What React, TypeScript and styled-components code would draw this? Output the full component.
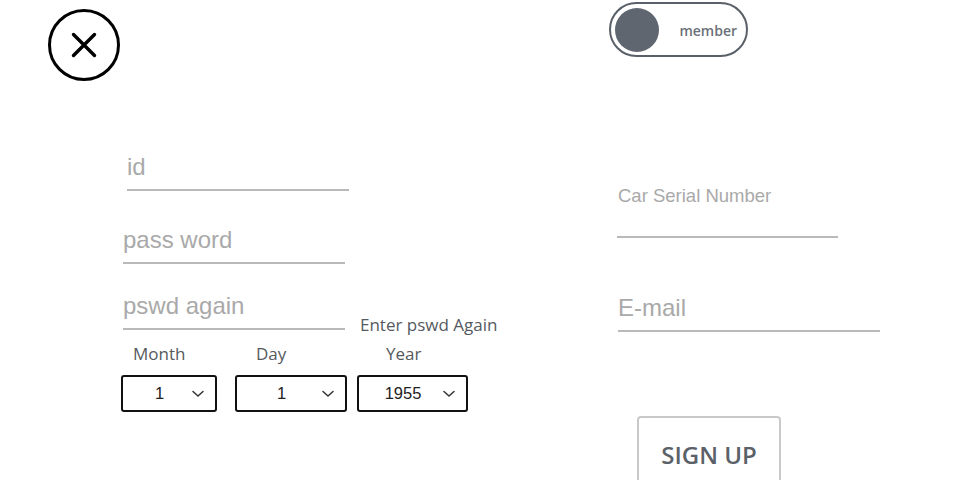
import React from "react";
import styled, { createGlobalStyle } from "styled-components";

const GlobalStyle = createGlobalStyle`
  html, body {
    margin: 0;
    padding: 0;
    background: #ffffff;
    overflow: hidden;
    width: 960px;
    height: 480px;
  }
  * { box-sizing: border-box; }
`;

const Page = styled.div`
  width: 960px;
  height: 480px;
  overflow: hidden;
  font-family: "Open Sans", "Noto Sans", sans-serif;
`;

const Header = styled.header`
  display: flex;
  align-items: flex-start;
  padding: 2px 0 0 48px;
`;

const CloseButton = styled.button`
  width: 72px;
  height: 72px;
  margin-top: 7px;
  padding: 0;
  border: none;
  background: transparent;
  display: block;
  cursor: pointer;
  svg { display: block; }
`;

const Toggle = styled.div`
  margin-left: 489px;
  width: 139px;
  height: 55px;
  border: 2px solid #5a6068;
  border-radius: 28px;
  display: flex;
  align-items: center;
  padding-left: 4px;
`;

const Knob = styled.div`
  width: 44px;
  height: 44px;
  border-radius: 50%;
  background: #5f6670;
`;

const ToggleLabel = styled.span`
  margin-left: auto;
  margin-right: 9px;
  margin-top: 2px;
  font-size: 14px;
  font-weight: 600;
  color: #6b7178;
`;

const Body = styled.main`
  display: grid;
  grid-template-columns: 496px 1fr;
  padding-left: 121px;
`;

const Column = styled.div`
  display: flex;
  flex-direction: column;
  align-items: flex-start;
`;

const Field = styled.input<{ $w: number; $top: number; $left: number }>`
  width: ${(p) => p.$w}px;
  margin-top: ${(p) => p.$top}px;
  margin-left: ${(p) => p.$left}px;
  height: 38px;
  padding: 0 0 8px 0;
  border: none;
  border-bottom: 2px solid #b9b9b9;
  outline: none;
  background: transparent;
  font-family: "Liberation Sans", Arial, sans-serif;
  font-size: 24px;
  line-height: 28px;
  color: #333;
  &::placeholder { color: #a9a9a9; }
`;

const PswdRow = styled.div`
  display: flex;
  align-items: flex-start;
  margin-top: 28px;
  margin-left: 2px;
`;

const Hint = styled.span`
  margin-top: 22px;
  margin-left: 15px;
  font-size: 17px;
  line-height: 22px;
  color: #555a60;
  white-space: nowrap;
`;

const DateRow = styled.div`
  display: flex;
  margin-top: 7px;
`;

const DateCol = styled.div<{ $gap: number }>`
  display: flex;
  flex-direction: column;
  margin-left: ${(p) => p.$gap}px;
`;

const DateLabel = styled.span<{ $indent: number }>`
  margin-left: ${(p) => p.$indent}px;
  font-size: 17px;
  line-height: 22px;
  color: #555a60;
`;

const Select = styled.div<{ $w: number }>`
  margin-top: 10px;
  width: ${(p) => p.$w}px;
  height: 37px;
  border: 2px solid #111;
  border-radius: 3px;
  display: flex;
  align-items: center;
  padding-left: 4px;
  padding-right: 11px;
  font-family: "Liberation Sans", Arial, sans-serif;
  font-size: 16.5px;
  color: #222;
`;

const SelectValue = styled.span`
  flex: 1;
  text-align: center;
`;

const CarLabel = styled.label`
  margin-top: 104px;
  margin-left: 1px;
  font-family: "Liberation Sans", Arial, sans-serif;
  font-size: 18.5px;
  line-height: 22px;
  color: #a9a9a9;
`;

const CarInput = styled.input`
  width: 221px;
  height: 31px;
  border: none;
  border-bottom: 2px solid #b9b9b9;
  outline: none;
  background: transparent;
  padding: 0;
`;

const SignUp = styled.button`
  margin-top: 84px;
  margin-left: 20px;
  width: 144px;
  height: 90px;
  border: 2px solid #c9c9c9;
  border-radius: 4px;
  background: #fff;
  padding: 20px 0 0 0;
  display: flex;
  justify-content: center;
  align-items: flex-start;
  font-family: "Open Sans", "Noto Sans", sans-serif;
  font-size: 24px;
  line-height: 33px;
  font-weight: 600;
  color: #5b6169;
`;

const Chevron = () => (
  <svg width="12" height="8" viewBox="0 0 12 8" fill="none">
    <path d="M1 1.5 L6 6 L11 1.5" stroke="#333" strokeWidth="1.5" strokeLinecap="round" strokeLinejoin="round" />
  </svg>
);

const CloseIcon = () => (
  <svg width="72" height="72" viewBox="0 0 72 72" fill="none">
    <circle cx="36" cy="36" r="34.5" stroke="#000" strokeWidth="3" />
    <path d="M25.5 25.5 L46.5 46.5 M46.5 25.5 L25.5 46.5" stroke="#000" strokeWidth="3.4" strokeLinecap="round" />
  </svg>
);

const dates = [
  { label: "Month", value: "1", w: 96, gap: 0, indent: 12 },
  { label: "Day", value: "1", w: 112, gap: 18, indent: 21 },
  { label: "Year", value: "1955", w: 111, gap: 10, indent: 29 },
];

export default function App() {
  return (
    <Page>
      <GlobalStyle />
      <Header>
        <CloseButton aria-label="close">
          <CloseIcon />
        </CloseButton>
        <Toggle>
          <Knob />
          <ToggleLabel>member</ToggleLabel>
        </Toggle>
      </Header>
      <Body>
        <Column>
          <Field $w={222} $top={72} $left={6} placeholder="id" />
          <Field $w={222} $top={35} $left={2} placeholder="pass word" type="text" />
          <PswdRow>
            <Field $w={222} $top={0} $left={0} placeholder="pswd again" />
            <Hint>Enter pswd Again</Hint>
          </PswdRow>
          <DateRow>
            {dates.map((d) => (
              <DateCol key={d.label} $gap={d.gap}>
                <DateLabel $indent={d.indent}>{d.label}</DateLabel>
                <Select $w={d.w}>
                  <SelectValue>{d.value}</SelectValue>
                  <Chevron />
                </Select>
              </DateCol>
            ))}
          </DateRow>
        </Column>
        <Column>
          <CarLabel>Car Serial Number</CarLabel>
          <CarInput />
          <Field $w={262} $top={56} $left={1} placeholder="E-mail" />
          <SignUp>SIGN UP</SignUp>
        </Column>
      </Body>
    </Page>
  );
}
